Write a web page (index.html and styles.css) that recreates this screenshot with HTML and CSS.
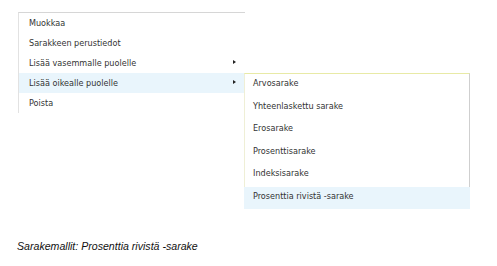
FILE: index.html
```html
<!DOCTYPE html>
<html lang="fi">
<head>
    <meta charset="UTF-8">
    <title>Sarakemallit</title>
    <link rel="stylesheet" href="styles.css">
</head>
<body>
    <div class="stage">
        <ul class="menu">
            <li class="item">Muokkaa</li>
            <li class="item">Sarakkeen perustiedot</li>
            <li class="item has-sub">Lisää vasemmalle puolelle<span class="arrow"></span></li>
            <li class="item has-sub open">Lisää oikealle puolelle<span class="arrow"></span>
                <ul class="submenu">
                    <li class="item">Arvosarake</li>
                    <li class="item">Yhteenlaskettu sarake</li>
                    <li class="item">Erosarake</li>
                    <li class="item">Prosenttisarake</li>
                    <li class="item">Indeksisarake</li>
                    <li class="item active">Prosenttia rivistä -sarake</li>
                </ul>
            </li>
            <li class="item">Poista</li>
        </ul>
    </div>
    <p class="caption">Sarakemallit: Prosenttia rivistä -sarake</p>
</body>
</html>
```

FILE: styles.css
```css
body {
    margin: 0;
    background-color: #fff;
    color: #333;
    font-family: "DejaVu Sans Condensed", "DejaVu Sans", sans-serif;
    font-size: 9px;
}
.stage {
    height: 239px;
    padding: 12px 0 0 18px;
    box-sizing: border-box;
}
.menu, .submenu {
    list-style: none;
    margin: 0;
    padding: 0;
}
.menu {
    width: 227px;
    box-sizing: border-box;
    border-top: 1px solid #d6d6d6;
    border-left: 1px solid #e2e2e2;
}
.menu > .item {
    position: relative;
    height: 20px;
    line-height: 20px;
    padding-left: 10px;
}
.item.open {
    background-color: #e9f5fc;
}
.arrow {
    position: absolute;
    right: 9px;
    top: 7px;
    width: 0;
    height: 0;
    border-left: 3px solid #222;
    border-top: 2.5px solid transparent;
    border-bottom: 2.5px solid transparent;
}
.submenu {
    position: absolute;
    left: 225px;
    top: 0;
    width: 226px;
    box-sizing: border-box;
    background-color: #fff;
    border-top: 1px solid #e8eaa6;
    border-left: 1px solid #efefd6;
    border-right: 1px solid #cfcfcf;
}
.submenu .item {
    height: 22.5px;
    line-height: 19px;
    padding-left: 8px;
}
.submenu .item.active {
    background-color: #e9f5fc;
    margin: 0 -1px 0 -1px;
    padding-left: 9px;
}
.caption {
    margin: 0 0 0 17px;
    font-family: "Liberation Sans", Arial, sans-serif;
    font-style: italic;
    font-size: 10.6px;
    line-height: 14px;
    color: #111;
}
```
